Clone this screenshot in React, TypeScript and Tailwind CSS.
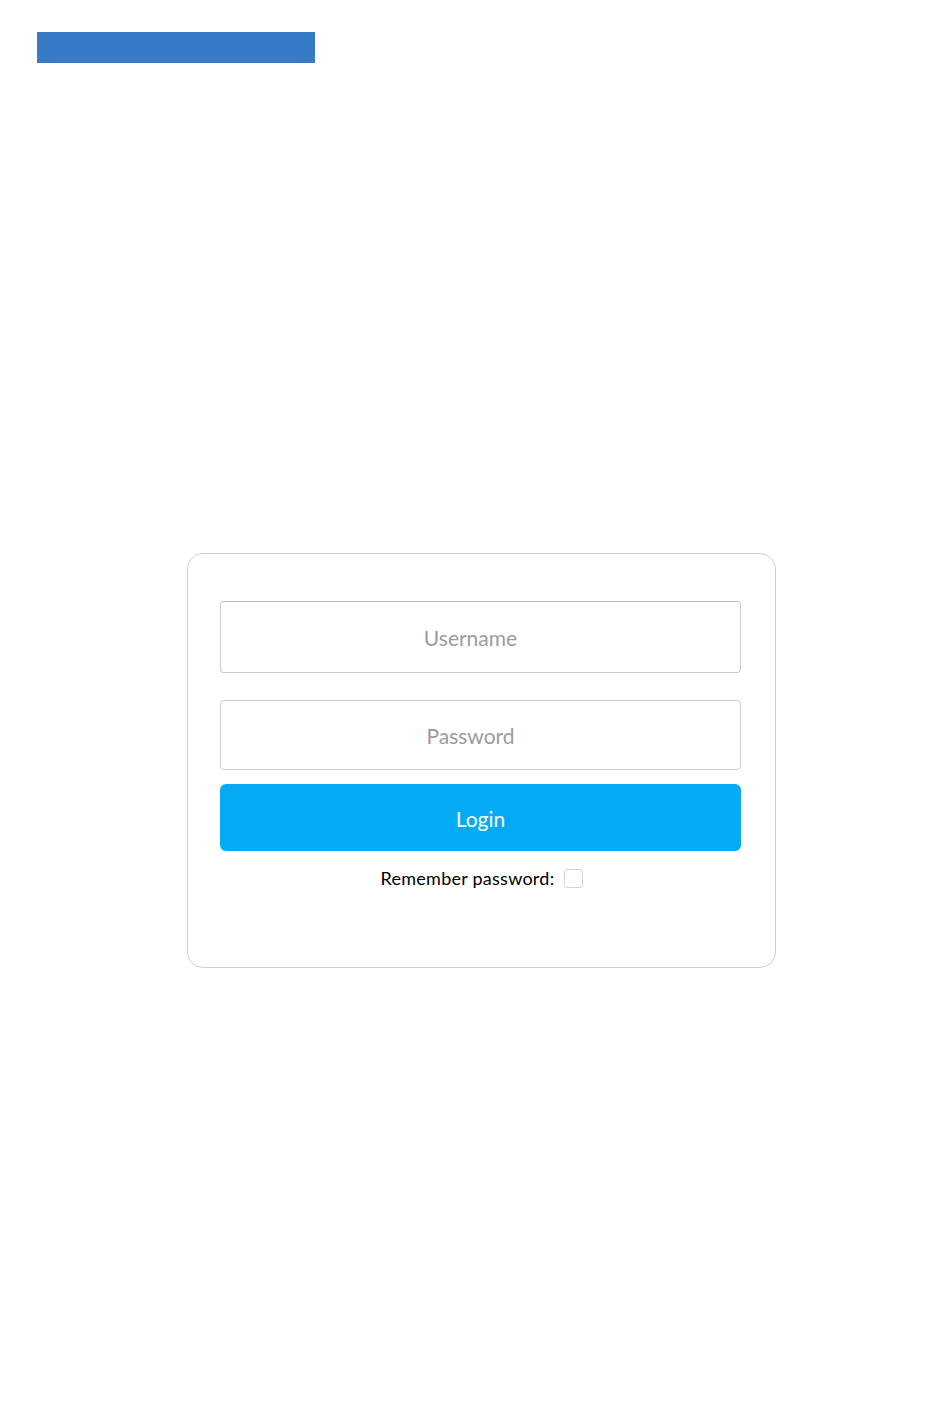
export default function App() {
  return (
    <div className="min-h-[1425px] w-[950px] bg-white font-['Lato','Open_Sans',sans-serif]">
      {/* top bar */}
      <div className="pl-[37px] pt-[32px]">
        <div className="h-[31px] w-[278px] bg-[#377ac6]" />
      </div>

      {/* login card */}
      <div className="ml-[187px] mt-[490px] w-[589px] rounded-[16px] border border-[#cfcfcf] bg-white pb-[79px] pl-[32px] pr-[34px] pt-[47px]">
        <input
          type="text"
          placeholder="Username"
          className="block h-[72px] w-full rounded-[4px] border border-[#cccccc] border-t-[#bdbdbd] pr-[20px] text-center text-[21px] text-[#555] outline-none placeholder:text-[#9f9a96]"
        />
        <input
          type="password"
          placeholder="Password"
          className="mt-[27px] block h-[70px] w-full rounded-[4px] border border-[#cccccc] pr-[20px] text-center text-[21px] text-[#555] outline-none placeholder:text-[#9f9a96]"
        />
        <button className="mt-[14px] block h-[67px] w-full rounded-[6px] bg-[#05aaf5] pt-[2px] text-[21px] text-white">
          Login
        </button>
        <div className="mt-[17px] flex items-center justify-center gap-[10px] pl-[3px]">
          <span className="text-[18px] leading-[20px] tracking-[0.25px] text-black">Remember password:</span>
          <span className="block h-[19px] w-[19px] rounded-[3px] border border-[#d4d4d4] bg-white" />
        </div>
      </div>
    </div>
  );
}
